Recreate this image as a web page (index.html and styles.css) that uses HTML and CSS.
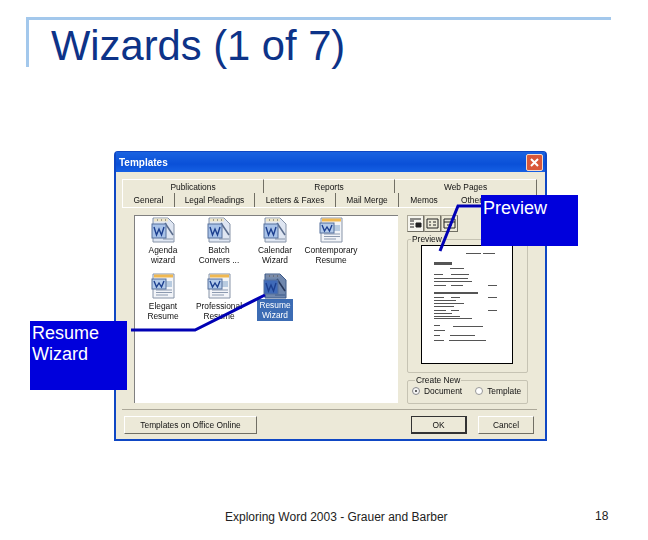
FILE: index.html
```html
<!DOCTYPE html>
<html lang="en">
<head>
  <meta charset="UTF-8" />
  <title>Wizards (1 of 7)</title>
  <link rel="stylesheet" href="styles.css">
</head>
<body>
  <svg class="defs" width="0" height="0">
    <symbol id="wizard" viewBox="0 0 24 26">
      <path d="M2 1h15l6 6v18H2z" fill="var(--page)" stroke="var(--edge)"/>
      <path d="M3 1.500h14v3H3z" fill="var(--tab)"/>
      <path d="M6 3h1M10 3h1M14 3h1" stroke="#555"/>
      <path d="M14 6l8 12" stroke="var(--wand)" stroke-width="1.500"/>
      <path d="M12 22h10" stroke="var(--edge)"/>
      <rect x="1" y="7" width="14" height="14" fill="var(--badge)" stroke="#56709c"/>
      <path d="M3 10l2.500 8 2.500-6 2.500 6 2.500-8" fill="none" stroke="#1c3f8f" stroke-width="1.400"/>
    </symbol>
    <symbol id="resume" viewBox="0 0 24 26">
      <path d="M2 1h21v24H2z" fill="#f2f4f8" stroke="#8794a8"/>
      <path d="M3 1.500h19v3H3z" fill="#f0b850"/>
      <path d="M15 8h6v6h-6z" fill="#b8cbe0"/>
      <path d="M5 17h16M5 19.500h16M5 22h12" stroke="#8c9ab0"/>
      <rect x="1" y="6" width="14" height="10" fill="#b4cbea" stroke="#56709c"/>
      <path d="M3 8l2.500 6 2.500-4 2.500 4 2.500-6" fill="none" stroke="#1c3f8f" stroke-width="1.400"/>
    </symbol>
  </svg>

  <div class="slide">
    <header class="title-frame">
      <h1>Wizards (1 of 7)</h1>
    </header>

    <div class="dialog">
      <div class="titlebar">
        <span class="titlebar-text">Templates</span>
        <span class="close-btn">
          <svg width="15" height="15" viewBox="0 0 15 15"><path d="M4 4l7 7M11 4l-7 7" stroke="#fff" stroke-width="2"/></svg>
        </span>
      </div>
      <div class="dialog-body">
        <div class="tabs tabs-back">
          <span class="tab tab-publications">Publications</span>
          <span class="tab tab-reports">Reports</span>
          <span class="tab tab-web">Web Pages</span>
        </div>
        <div class="tabs tabs-front">
          <span class="tab tab-general">General</span>
          <span class="tab tab-legal">Legal Pleadings</span>
          <span class="tab tab-letters">Letters &amp; Faxes</span>
          <span class="tab tab-mail">Mail Merge</span>
          <span class="tab tab-memos">Memos</span>
          <span class="tab tab-other">Other</span>
        </div>
        <div class="panel">
          <div class="file-list">
            <div class="file"><svg class="icon wiz"><use href="#wizard"/></svg><span class="label">Agenda<br>wizard</span></div>
            <div class="file"><svg class="icon wiz"><use href="#wizard"/></svg><span class="label">Batch<br>Convers ...</span></div>
            <div class="file"><svg class="icon wiz"><use href="#wizard"/></svg><span class="label">Calendar<br>Wizard</span></div>
            <div class="file"><svg class="icon"><use href="#resume"/></svg><span class="label">Contemporary<br>Resume</span></div>
            <div class="file"><svg class="icon"><use href="#resume"/></svg><span class="label">Elegant<br>Resume</span></div>
            <div class="file"><svg class="icon"><use href="#resume"/></svg><span class="label">Professional<br>Resume</span></div>
            <div class="file selected"><svg class="icon wiz"><use href="#wizard"/></svg><span class="label">Resume<br>Wizard</span></div>
          </div>
          <div class="side">
            <div class="view-btns">
              <span class="view-btn active"><svg width="13" height="11"><path d="M1 1h11M1 3h4M7 5h5v4H7zM1 6h4M1 9h4" stroke="#222" fill="#222"/></svg></span>
              <span class="view-btn"><svg width="13" height="11"><path d="M1 1h11v9H1zM3 4h2M7 4h3M3 7h2M7 7h3" stroke="#222" fill="none"/></svg></span>
              <span class="view-btn"><svg width="13" height="11"><path d="M1 1h11v9H1zM1 4h11M4 7h5" stroke="#222" fill="none"/></svg></span>
            </div>
            <fieldset class="group preview-group">
              <legend>Preview</legend>
              <div class="page">
                <svg width="90" height="117" viewBox="0 0 90 117">
                  <g fill="#555" transform="translate(-1 -1)">
                    <rect x="45" y="8" width="15" height="1"/><rect x="62" y="8" width="12" height="1"/>
                    <rect x="13" y="17" width="18" height="3"/><rect x="29" y="23" width="14" height="1"/>
                    <rect x="13" y="29" width="9" height="1"/><rect x="30" y="29" width="18" height="1"/>
                    <rect x="13" y="33" width="34" height="1"/><rect x="13" y="36" width="38" height="1"/>
                    <rect x="13" y="40" width="12" height="1"/><rect x="30" y="40" width="12" height="1"/><rect x="67" y="40" width="9" height="1"/>
                    <rect x="13" y="47" width="44" height="2"/>
                    <rect x="13" y="52" width="10" height="1"/><rect x="30" y="52" width="9" height="1"/><rect x="67" y="52" width="9" height="1"/>
                    <rect x="13" y="55" width="22" height="1"/><rect x="13" y="58" width="30" height="1"/><rect x="13" y="61" width="20" height="1"/>
                    <rect x="13" y="65" width="12" height="1"/><rect x="30" y="65" width="8" height="1"/><rect x="67" y="65" width="9" height="1"/>
                    <rect x="13" y="68" width="18" height="1"/><rect x="13" y="71" width="26" height="1"/><rect x="13" y="73" width="38" height="1"/>
                    <rect x="13" y="80" width="6" height="1"/><rect x="13" y="85" width="11" height="1"/><rect x="32" y="81" width="30" height="1"/>
                    <rect x="13" y="90" width="6" height="1"/><rect x="29" y="90" width="25" height="1"/>
                    <rect x="13" y="95" width="10" height="1"/><rect x="28" y="95" width="37" height="1"/>
                  </g>
                </svg>
              </div>
            </fieldset>
            <fieldset class="group create-group">
              <legend>Create New</legend>
              <span class="radio-row"><span class="radio checked"></span>Document</span>
              <span class="radio-row"><span class="radio"></span>Template</span>
            </fieldset>
          </div>
        </div>
        <div class="actions">
          <span class="btn btn-online">Templates on Office Online</span>
          <span class="btn btn-ok">OK</span>
          <span class="btn btn-cancel">Cancel</span>
        </div>
      </div>
    </div>

    <svg class="leader-lines" width="648" height="540">
      <polyline points="481,206 458,206 440,251"/>
      <polyline points="131,330 195,330 265,295"/>
    </svg>
    <div class="callout callout-preview">Preview</div>
    <div class="callout callout-resume">Resume Wizard</div>

    <footer class="slide-footer">
      <span class="footer-text">Exploring Word 2003 - Grauer and Barber</span>
      <span class="page-num">18</span>
    </footer>
  </div>
</body>
</html>
```

FILE: styles.css
```css
body {
  margin: 0;
  background-color: white;
  font-family: "Liberation Sans", Arial, sans-serif;
}

.defs {
  position: absolute;
}

.slide {
  position: relative;
  width: 648px;
  height: 540px;
  overflow: hidden;
}

/* title */
.title-frame {
  position: absolute;
  left: 26px;
  top: 17px;
  width: 582px;
  height: 47px;
  border-top: 3px solid #a3c8ec;
  border-left: 3px solid #a3c8ec;
}

h1 {
  margin: 0;
  padding-left: 22px;
  color: #0d3388;
  font-size: 41.7px;
  font-weight: normal;
  line-height: 52px;
}

/* dialog window, slightly soft like the scaled capture */
.dialog {
  position: absolute;
  left: 114px;
  top: 151px;
  width: 433px;
  height: 290px;
  box-sizing: border-box;
  display: flex;
  flex-direction: column;
  border: 2px solid #0f47c4;
  border-top: 1px solid #0f47c4;
  border-radius: 4px 4px 0 0;
  background-color: #ece9d8;
  filter: blur(0.35px);
}

.titlebar {
  display: flex;
  align-items: center;
  justify-content: space-between;
  height: 20px;
  padding: 0 2px 0 3px;
  background: linear-gradient(#1a62e0, #0a50d8 60%, #1560e4);
}

.titlebar-text {
  color: white;
  font-size: 10px;
  font-weight: bold;
}

.close-btn {
  display: flex;
  width: 15px;
  height: 15px;
  border: 1px solid #f4d8c8;
  border-radius: 2px;
  background-color: #d9583a;
}

.dialog-body {
  flex: 1;
  padding: 7px 8px 0 6px;
  font-size: 8.4px;
  color: #111;
}

/* tabs */
.tabs {
  display: flex;
  height: 14px;
}

.tab {
  box-sizing: border-box;
  padding-top: 2px;
  border-right: 1px solid #716f64;
  text-align: center;
  white-space: nowrap;
}

.tabs-back .tab {
  border-top: 1px solid white;
}

.tab-publications { width: 142px; border-left: 1px solid white; }
.tab-reports { width: 131px; }
.tab-web { width: 142px; }
.tab-general { width: 53px; border-left: 1px solid white; }
.tab-legal { width: 80px; }
.tab-letters { width: 81px; }
.tab-mail { width: 63px; }
.tab-memos { width: 50px; border-right: none; }
.tab-other { width: 88px; padding-left: 12px; text-align: left; }

.panel {
  display: flex;
  box-sizing: border-box;
  height: 203px;
  padding: 7px 9px 0 12px;
  gap: 9px;
  border-top: 1px solid white;
  border-bottom: 1px solid #aca899;
}

.file-list {
  box-sizing: border-box;
  display: grid;
  grid-template-columns: repeat(4, 56px);
  grid-auto-rows: 56px;
  width: 264px;
  height: 188px;
  border-top: 1px solid #808080;
  border-left: 1px solid #808080;
  background-color: white;
}

.file {
  display: flex;
  flex-direction: column;
  align-items: center;
  --page: #dfe6f2;
  --edge: #8794a8;
  --tab: #eee6c8;
  --wand: #5a6c8c;
  --badge: #a8c2e8;
}

.icon {
  width: 24px;
  height: 26px;
  margin: 1px 0 2px;
}

.label {
  text-align: center;
  line-height: 10px;
  white-space: nowrap;
}

.selected {
  --page: #6f87ad;
  --edge: #3f5a88;
  --tab: #7d8ca8;
  --wand: #26365a;
  --badge: #3f6ab8;
}

.selected .icon {
  margin-bottom: 0;
}

.selected .label {
  padding: 1px 2px;
  background-color: #3c6cb4;
  color: white;
}

/* right column */
.side {
  display: flex;
  flex-direction: column;
  width: 121px;
}

.view-btns {
  display: flex;
  height: 17px;
  margin-bottom: 2px;
}

.view-btn {
  display: flex;
  align-items: center;
  justify-content: center;
  box-sizing: border-box;
  width: 17px;
  height: 17px;
  border: 1px solid #aca899;
  border-right-color: #716f64;
  border-bottom-color: #716f64;
}

.view-btn.active {
  background-color: #f6f5ee;
}

.group {
  margin: 0;
  padding: 0;
  border: 1px solid #c6c3b3;
  border-radius: 2px;
}

.group legend {
  margin-left: 3px;
  padding: 0 1px;
}

.preview-group {
  height: 139px;
  box-sizing: border-box;
  display: block;
}

.page {
  box-sizing: border-box;
  width: 92px;
  height: 119px;
  margin: 1px 0 0 13px;
  border: 1px solid black;
  background-color: white;
}

.page svg {
  display: block;
}

.create-group {
  box-sizing: border-box;
  display: flex;
  gap: 13px;
  height: 29px;
  margin-top: 2px;
  padding: 1px 0 0 4px;
}

.radio-row {
  display: inline-flex;
  align-items: center;
  gap: 4px;
}

.radio {
  box-sizing: border-box;
  width: 8px;
  height: 8px;
  border: 1px solid #999;
  border-radius: 50%;
  background-color: white;
}

.radio.checked {
  border: 3px solid #f4f4f4;
  outline: 1px solid #888;
  outline-offset: -1px;
  background-color: #333;
}

/* bottom buttons */
.actions {
  display: flex;
  padding: 6px 0 0 2px;
}

.btn {
  box-sizing: border-box;
  height: 18px;
  border: 1px solid;
  border-color: white #716f64 #716f64 white;
  background-color: #ece9d8;
  text-align: center;
  line-height: 16px;
}

.btn-online { width: 133px; margin-right: 154px; }
.btn-ok { width: 56px; margin-right: 11px; border-color: #333; border-width: 1px 2px 2px 1px; }
.btn-cancel { width: 56px; }

/* blue callouts over the screenshot */
.leader-lines {
  position: absolute;
  left: 0;
  top: 0;
}

.leader-lines polyline {
  fill: none;
  stroke: #0000b4;
  stroke-width: 3;
}

.callout {
  position: absolute;
  box-sizing: border-box;
  width: 97px;
  padding: 2px;
  background-color: #0000dc;
  color: white;
  font-size: 18px;
  line-height: 21px;
}

.callout-preview {
  left: 481px;
  top: 195px;
  height: 51px;
  padding-top: 3px;
}

.callout-resume {
  left: 30px;
  top: 321px;
  height: 69px;
}

/* footer */
.slide-footer {
  position: absolute;
  left: 0;
  right: 0;
  top: 509px;
  font-size: 12px;
  color: #222;
}

.footer-text {
  position: absolute;
  left: 225px;
  top: 1px;
}

.page-num {
  position: absolute;
  left: 595px;
}
```
